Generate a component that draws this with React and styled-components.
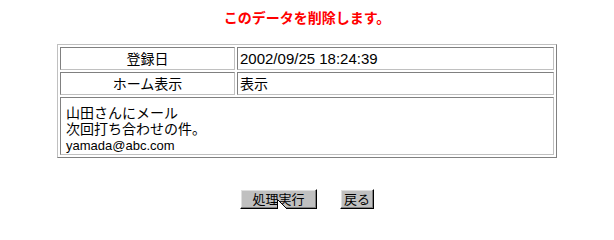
import React from "react";
import styled, { createGlobalStyle } from "styled-components";

const Global = createGlobalStyle`
  html, body { margin: 0; padding: 0; background: #ffffff; }
  body {
    margin: 8px;
    font-family: "Noto Sans CJK JP", "Liberation Sans", sans-serif;
    color: #000000;
  }
`;

const Page = styled.div`
  position: relative;
  display: flex;
  flex-direction: column;
  align-items: center;
`;

const Title = styled.div`
  color: #ff0000;
  font-weight: bold;
  font-size: 14px;
  line-height: 18px;
  text-align: center;
`;

const Table = styled.table`
  margin-top: 18px;
  width: 500px;
  box-sizing: border-box;
  border-collapse: separate;
  border-spacing: 2px;
  border: 1px solid;
  border-color: #c0c0c0 #808080 #808080 #c0c0c0;
`;

const Cell = styled.td`
  border: 1px solid;
  border-color: #808080 #c0c0c0 #c0c0c0 #808080;
  padding: 0 2px;
  font-size: 14px;
  line-height: 21px;
  vertical-align: middle;
  white-space: nowrap;
`;

const LabelCell = styled(Cell)`
  width: 175px;
  box-sizing: border-box;
  text-align: center;
`;

const ValueCell = styled(Cell)`
  text-align: left;
  font-family: ${(p) => (p.$latin ? '"Liberation Sans", sans-serif' : 'inherit')};
  font-size: ${(p) => (p.$latin ? "15px" : "14px")};
`;

const NoteCell = styled(Cell)`
  padding: 6px 5px 0 5px;
  vertical-align: top;
`;

const NoteLine = styled.div`
  font-size: 14px;
  line-height: 16px;
`;

const Email = styled.div`
  margin-top: 2px;
  font-family: "Liberation Sans", sans-serif;
  font-size: 13px;
  line-height: 16px;
`;

const ButtonRow = styled.div`
  margin-top: 31px;
  display: flex;
  gap: 23px;
`;

const Button = styled.button`
  box-sizing: border-box;
  width: ${(p) => p.$w}px;
  height: 20px;
  padding: 0;
  margin: 0;
  background: #c0c0c0;
  border: 1px solid;
  border-color: #ffffff #000000 #000000 #ffffff;
  box-shadow: inset -1px -1px 0 #808080, inset 1px 1px 0 #dfdfdf;
  font-family: "Noto Sans CJK JP", sans-serif;
  font-size: 13px;
  line-height: 16px;
  color: #000000;
  display: flex;
  align-items: center;
  justify-content: center;
`;

const Cursor = styled.svg`
  position: absolute;
  left: 269px;
  top: 191px;
  pointer-events: none;
`;

export default function App() {
  return (
    <>
      <Global />
      <Page>
        <Title>このデータを削除します。</Title>
        <Table>
          <tbody>
            <tr>
              <LabelCell>登録日</LabelCell>
              <ValueCell $latin>2002/09/25 18:24:39</ValueCell>
            </tr>
            <tr>
              <LabelCell>ホーム表示</LabelCell>
              <ValueCell>表示</ValueCell>
            </tr>
            <tr>
              <NoteCell colSpan={2}>
                <NoteLine>山田さんにメール</NoteLine>
                <NoteLine>次回打ち合わせの件。</NoteLine>
                <Email>yamada@abc.com</Email>
              </NoteCell>
            </tr>
          </tbody>
        </Table>
        <ButtonRow>
          <Button $w={77}>処理実行</Button>
          <Button $w={34}>戻る</Button>
        </ButtonRow>
        <Cursor width="13" height="21" viewBox="0 0 13 21">
          <path
            d="M0.5 0.5 L0.5 16.5 L4.5 12.5 L7.5 19.5 L9.5 18.5 L6.5 11.5 L11.5 11.5 Z"
            fill="#ffffff"
            stroke="#000000"
            strokeWidth="1"
          />
        </Cursor>
      </Page>
    </>
  );
}
